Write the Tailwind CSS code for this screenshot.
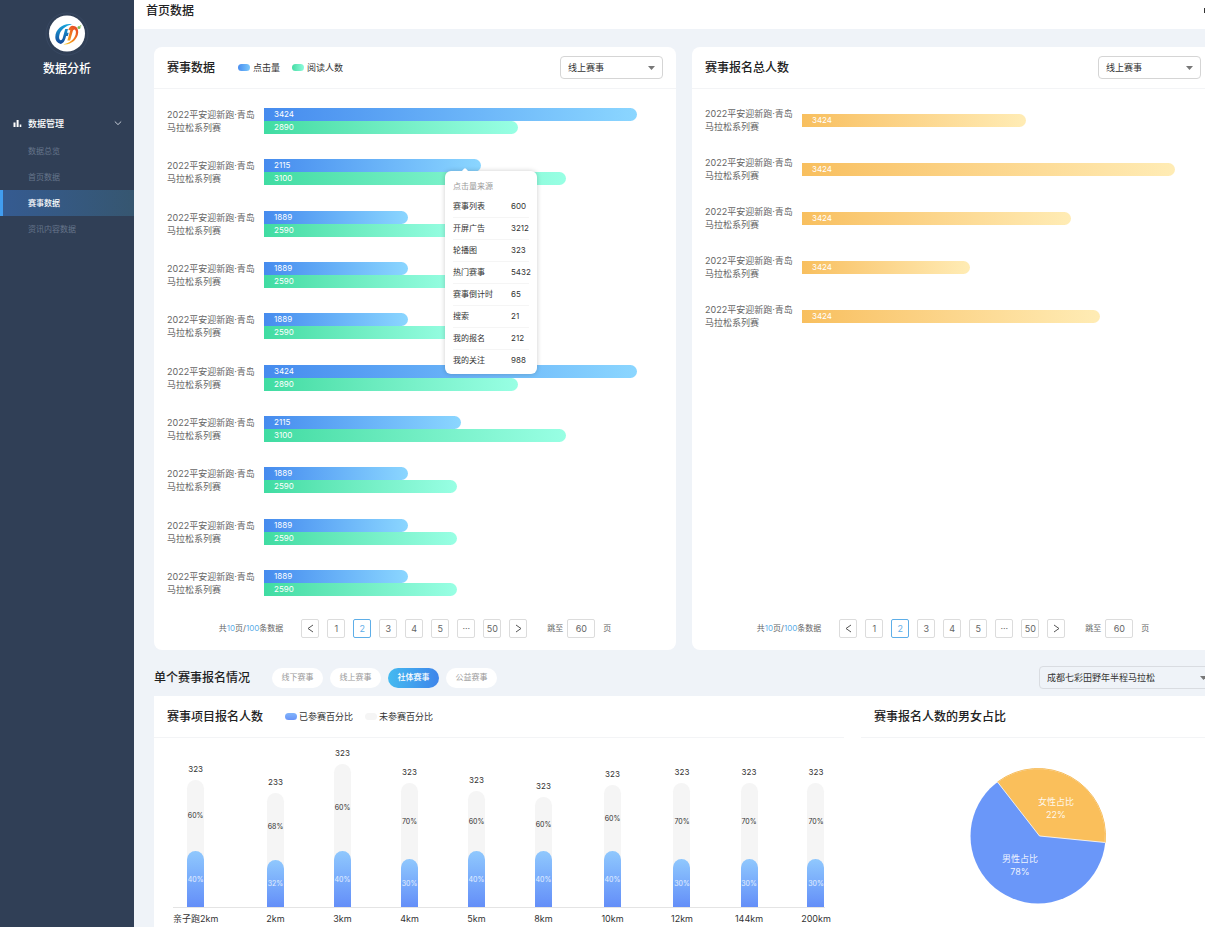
<!DOCTYPE html>
<html lang="zh-CN">
<head>
<meta charset="utf-8">
<meta name="viewport" content="width=device-width, initial-scale=1">
<title>数据分析 - 首页数据</title>
<script src="https://cdn.jsdelivr.net/npm/@tailwindcss/browser@4"></script>
</head>
<body class="flex min-h-screen overflow-x-hidden bg-[#eff3f8] font-['Inter','Noto_Sans_CJK_SC',sans-serif] text-[9px] leading-[13px] text-[#333]">

<aside class="w-[134px] shrink-0 bg-[#303f56] text-white">
  <div class="flex flex-col items-center pt-3">
    <svg class="size-11" viewBox="0 0 44 44" aria-hidden="true">
      <defs>
        <linearGradient id="lb" x1="0" y1="0" x2="0" y2="1"><stop offset="0" stop-color="#18a5dc"/><stop offset="1" stop-color="#14499a"/></linearGradient>
        <linearGradient id="lo" x1="1" y1="0" x2="0" y2="1"><stop offset="0" stop-color="#e5402a"/><stop offset=".5" stop-color="#f0791e"/><stop offset="1" stop-color="#fbd21c"/></linearGradient>
      </defs>
      <circle cx="22" cy="22" r="21" fill="none" stroke="#3a4a64" stroke-width=".8"/>
      <circle cx="22" cy="21.500" r="18" fill="#fff"/>
      <path d="M27 12.200C18 11 10.500 17 10.300 25c0 3.500 2 6.200 5.600 7 2.400-1 3.700-2.800 4.500-5.500l.7-2.600h1.700l.9-3.200h-1.700l1-3.600h-2.800l-2.400 8.600c-.4 1.500-1 2.300-2.200 2.600-1.600-1-1.800-3-1.200-5.400C15.600 17.800 20.500 13.600 27 12.200z" fill="url(#lb)"/>
      <path d="M18 32.300c8 .9 14.800-4.800 15.200-11.800.2-4.200-2-6.500-6-6.700-2 .6-3.200 2-3.900 4.300l2 .1-2.900 10.300h2.700l2.500-8.800c.4-1.300 1-2 2.100-2.100 1.400 1 1.400 2.800.9 4.800-1.400 5-5.800 8.700-12.600 9.900z" fill="url(#lo)"/>
      <circle cx="34" cy="15.500" r="1.500" fill="#7dbb58"/>
      <circle cx="35.600" cy="13.900" r=".8" fill="#a4cf7e"/>
    </svg>
    <p class="mt-[5px] text-xs leading-4 font-medium">数据分析</p>
  </div>
  <nav class="mt-[34px]" aria-label="主导航">
    <button type="button" class="flex h-6 w-full items-center pr-3 pl-[13px] text-left font-medium">
      <svg class="mr-1.5 size-[9px]" viewBox="0 0 9 9" fill="#fff" aria-hidden="true"><path d="M.5 3.500h2V8h-2zM3.600 1h2v7h-2zM6.700 5.500h1.600V8H6.700z"/></svg>
      <span class="flex-1">数据管理</span>
      <svg class="size-2" viewBox="0 0 8 8" fill="none" stroke="#c4cbd6" aria-hidden="true"><path d="M.8 2.500 4 5.600l3.200-3.100"/></svg>
    </button>
    <ul class="mt-[3px] text-[8px] text-[#66758b]">
      <li><a href="#" class="flex h-[26px] items-center pl-7">数据总览</a></li>
      <li><a href="#" class="flex h-[26px] items-center pl-7">首页数据</a></li>
      <li><a href="#" aria-current="page" class="flex h-[26px] items-center border-l-[3px] border-[#419df0] bg-linear-to-r from-[#355b91] to-[#365670] pl-[25px] font-medium text-white">赛事数据</a></li>
      <li><a href="#" class="flex h-[26px] items-center pl-7">资讯内容数据</a></li>
    </ul>
  </nav>
</aside>

<main class="flex min-w-0 flex-1 flex-col overflow-hidden">
  <header class="flex h-[29px] shrink-0 items-start justify-between bg-white pt-[3px] pl-3">
    <h1 class="text-xs leading-4 font-medium text-[#222]">首页数据</h1>
    <span class="mt-[5px] h-[5px] w-px bg-[#333]"></span>
  </header>

  <div class="flex min-w-[1080px] flex-1 flex-col pt-[18px] pl-5">
    <div class="grid grid-cols-2 gap-4">
      <section class="flex flex-col rounded-lg bg-white">
        <div class="flex h-[42px] items-center border-b border-[#f3f4f6] px-[13px]">
          <h2 class="mr-[23px] text-xs leading-4 font-medium text-[#222]">赛事数据</h2>
          <span class="mr-[3px] h-[7px] w-3 rounded-full bg-linear-to-r from-[#4a8df0] to-[#7cc8fb]"></span>
          <span class="mr-3">点击量</span>
          <span class="mr-[3px] h-[7px] w-3 rounded-full bg-linear-to-r from-[#43dca4] to-[#8cfbdc]"></span>
          <span>阅读人数</span>
          <div class="relative ml-auto">
            <select aria-label="赛事类型" class="h-[23px] w-[103px] appearance-none rounded-sm border border-[#d5d5d5] bg-white pl-[7px] text-[9px] text-[#333]"><option>线上赛事</option><option>线下赛事</option></select>
            <svg class="pointer-events-none absolute top-[10px] right-2 h-1 w-[7px]" viewBox="0 0 7 4" fill="#777" aria-hidden="true"><path d="M0 0h7L3.500 4z"/></svg>
          </div>
        </div>
        <ul id="clicks" class="mx-[13px] mt-[19px] flex min-h-[488px] flex-col justify-between"></ul>
        <div data-pager></div>
      </section>

      <section class="flex flex-col rounded-lg bg-white">
        <div class="flex h-[42px] items-center border-b border-[#f3f4f6] px-[13px]">
          <h2 class="text-xs leading-4 font-medium text-[#222]">赛事报名总人数</h2>
          <div class="relative ml-auto">
            <select aria-label="报名赛事类型" class="h-[23px] w-[103px] appearance-none rounded-sm border border-[#d5d5d5] bg-white pl-[7px] text-[9px] text-[#333]"><option>线上赛事</option><option>线下赛事</option></select>
            <svg class="pointer-events-none absolute top-[10px] right-2 h-1 w-[7px]" viewBox="0 0 7 4" fill="#777" aria-hidden="true"><path d="M0 0h7L3.500 4z"/></svg>
          </div>
        </div>
        <ul id="signups" class="mx-[13px] mt-[18px] flex flex-1 flex-col gap-[23px]"></ul>
        <div data-pager></div>
      </section>
    </div>

    <div class="mt-4 flex items-center">
      <h2 class="mr-[22px] text-xs leading-4 font-medium text-[#222]">单个赛事报名情况</h2>
      <div class="flex gap-[7px] text-[8px] text-[#999]">
        <button type="button" class="h-5 w-[51px] rounded-full bg-white">线下赛事</button>
        <button type="button" class="h-5 w-[51px] rounded-full bg-white">线上赛事</button>
        <button type="button" aria-pressed="true" class="h-5 w-[51px] rounded-full bg-linear-to-r from-[#45baf0] to-[#3f85ea] font-medium text-white">社体赛事</button>
        <button type="button" class="h-5 w-[51px] rounded-full bg-white">公益赛事</button>
      </div>
      <div class="relative ml-auto">
        <select aria-label="选择赛事" class="h-[23px] w-[175px] appearance-none rounded-sm border border-[#d9dce1] bg-transparent pl-[7px] text-[9px] text-[#333]"><option>成都七彩田野年半程马拉松</option></select>
        <svg class="pointer-events-none absolute top-[10px] right-[7px] h-1 w-[7px]" viewBox="0 0 7 4" fill="#777" aria-hidden="true"><path d="M0 0h7L3.500 4z"/></svg>
      </div>
    </div>

    <div class="mt-[7px] flex flex-1 bg-white">
      <section class="flex-[707]">
        <div class="mr-[17px] flex h-[42px] items-center border-b border-[#f3f4f6] px-[13px]">
          <h3 class="mr-[22px] text-xs leading-4 font-medium text-[#222]">赛事项目报名人数</h3>
          <span class="mr-[2px] h-[7px] w-3 rounded-full bg-linear-to-b from-[#82b4fb] to-[#6a94f8]"></span>
          <span class="mr-3">已参赛百分比</span>
          <span class="mr-[2px] h-[7px] w-3 rounded-full bg-[#f5f5f5]"></span>
          <span>未参赛百分比</span>
        </div>
        <div class="relative mr-[11px] ml-[19px]">
          <div class="absolute top-[169px] right-[25px] left-0 h-px bg-[#e4e4e4]"></div>
          <ul id="events" class="grid grid-cols-[69fr_repeat(5,67fr)_71fr_68fr_66fr_68fr] justify-items-center"></ul>
        </div>
      </section>
      <section class="flex-[353]">
        <div class="flex h-[42px] items-center border-b border-[#f3f4f6] px-[13px]">
          <h3 class="text-xs leading-4 font-medium text-[#222]">赛事报名人数的男女占比</h3>
        </div>
        <svg class="mx-auto mt-[29px] block size-[138px]" viewBox="-69 -69 138 138" role="img" aria-label="男性占比 78%，女性占比 22%" font-size="9" text-anchor="middle" fill="#fff">
          <circle r="67.500" fill="#6a97f9"/>
          <path d="M1.500 0 -40.500 -54A67.500 67.500 0 0 1 67.200 6.500Z" fill="#fabf5b" stroke="#fff" stroke-width=".8"/>
          <path d="M-40.500 -54A67.500 67.500 0 0 1 67.200 6.500" fill="none" stroke="#fabf5b"/>
          <text x="18" y="-31" fill-opacity=".9">女性占比</text><text x="18" y="-18" fill-opacity=".9">22%</text>
          <text x="-18" y="26" fill-opacity=".9">男性占比</text><text x="-18" y="39" fill-opacity=".9">78%</text>
        </svg>
      </section>
    </div>
  </div>
</main>

<script>
const TRACK = 399;
const pct = n => (n / TRACK * 100) + '%';
const name = '<span class="w-[97px] shrink-0 whitespace-nowrap text-[#666]">2022平安迎新跑·青岛<br>马拉松系列赛</span>';

const sources = [['赛事列表', 600], ['开屏广告', 3212], ['轮播图', 323], ['热门赛事', 5432], ['赛事倒计时', 65], ['搜索', 21], ['我的报名', 212], ['我的关注', 988]];
const tooltip = `
  <div role="tooltip" class="absolute top-[12px] left-[181px] z-10 w-[92px] rounded-md bg-white px-2 pt-[7px] pb-[3px] text-[8px] text-[#333] shadow-[0_0_5px_rgba(0,0,0,0.2)]">
    <svg class="absolute -top-[3px] left-4 h-1 w-2" viewBox="0 0 8 4" fill="#fff" aria-hidden="true"><path d="M0 4 3 .7q1-1 2 0L8 4z"/></svg>
    <table class="w-full table-fixed">
      <caption class="h-[17px] text-left leading-[17px] text-[#999]">点击量来源</caption>
      <tbody>${sources.map(([k, v]) => `<tr class="h-[22px] border-b border-[#f5f5f5] last:border-0"><th scope="row" class="w-[58px] p-0 text-left font-normal whitespace-nowrap">${k}</th><td class="p-0">${v}</td></tr>`).join('')}</tbody>
    </table>
  </div>`;

const clicks = [
  [3424, 373, 2890, 254], [2115, 217, 3100, 302], [1889, 144, 2590, 193], [1889, 144, 2590, 193], [1889, 144, 2590, 193],
  [3424, 373, 2890, 254], [2115, 197, 3100, 302], [1889, 144, 2590, 193], [1889, 144, 2590, 193], [1889, 144, 2590, 193]
];
document.getElementById('clicks').innerHTML = clicks.map(([a, aw, b, bw], i) => `
  <li class="flex">${name}
    <div class="relative flex-1 text-[8px] text-white">
      <div class="h-[13px] rounded-r-full bg-linear-to-r from-[#468bee] to-[#8bd6ff] pl-2.5" style="width:${pct(aw)}">${a}</div>
      <div class="h-[13px] rounded-r-full bg-linear-to-r from-[#3fdca2] to-[#98ffe4] pl-2.5" style="width:${pct(bw)}">${b}</div>
      ${i === 1 ? tooltip : ''}
    </div>
  </li>`).join('');

document.getElementById('signups').innerHTML = [224, 373, 269, 168, 298].map(w => `
  <li class="flex items-center">${name}
    <div class="flex-1 text-[8px] text-white"><div class="h-[13px] rounded-r-full bg-linear-to-r from-[#f8bf5e] to-[#ffecb5] pl-2.5" style="width:${pct(w)}">3424</div></div>
  </li>`).join('');

const box = 'flex h-[19px] w-[18px] items-center justify-center rounded-xs border border-[#dcdcdc]';
const on = 'flex h-[19px] w-[18px] items-center justify-center rounded-xs border border-[#5eaee8] text-[#5eaee8]';
const arrow = (d, label) => `<button type="button" aria-label="${label}" class="${box}"><svg class="size-[9px]" viewBox="0 0 9 9" fill="none" stroke="#555" aria-hidden="true"><path d="${d}"/></svg></button>`;
document.querySelectorAll('[data-pager]').forEach((el, i) => {
  el.outerHTML = `
  <nav aria-label="分页" class="mt-[23px] mb-3 flex items-center justify-center text-[#666]">
    <span class="mr-[18px] text-[8px]">共<span class="text-[#5eaee8]">10</span>页/<span class="text-[#5eaee8]">100</span>条数据</span>
    <div class="flex gap-2">
      ${arrow('M7 1 2 4.500 7 8', '上一页')}
      ${['1', '2', '3', '4', '5', '···', '50'].map(n => `<button type="button" class="${n === '2' ? on : box}">${n}</button>`).join('')}
      ${arrow('M2 1l5 3.500L2 8', '下一页')}
    </div>
    <label for="jump${i}" class="mr-1 ml-5 text-[8px]">跳至</label>
    <input id="jump${i}" value="60" class="h-[19px] w-7 rounded-xs border border-[#dcdcdc] text-center">
    <span class="ml-2 text-[8px]">页</span>
  </nav>`;
});

const events = [
  ['亲子跑2km', 323, 127, 56, 60, 40], ['2km', 233, 114, 47, 68, 32], ['3km', 323, 143, 56, 60, 40], ['4km', 323, 124, 48, 70, 30],
  ['5km', 323, 116, 56, 60, 40], ['8km', 323, 110, 56, 60, 40], ['10km', 323, 122, 56, 60, 40], ['12km', 323, 124, 48, 70, 30],
  ['144km', 323, 124, 48, 70, 30], ['200km', 323, 124, 48, 70, 30]
];
document.getElementById('events').innerHTML = events.map(([label, total, h, fill, rest, done]) => `
  <li class="flex flex-col items-center first:justify-self-start">
    <div class="relative flex h-[169px] flex-col items-center justify-end">
      <span class="mb-1 text-[8px]">${total}</span>
      <div class="flex w-[17px] flex-col overflow-hidden rounded-t-full bg-[#f5f5f5] text-[7px]" style="height:${h}px">
        <span class="flex flex-1 items-center justify-center">${rest}%</span>
        <span class="flex items-center justify-center rounded-t-full bg-linear-to-b from-[#90c8fd] to-[#648ef8] text-white/80" style="height:${fill}px">${done}%</span>
      </div>
    </div>
    <span class="mt-[5px] whitespace-nowrap">${label}</span>
  </li>`).join('');
</script>
</body>
</html>
